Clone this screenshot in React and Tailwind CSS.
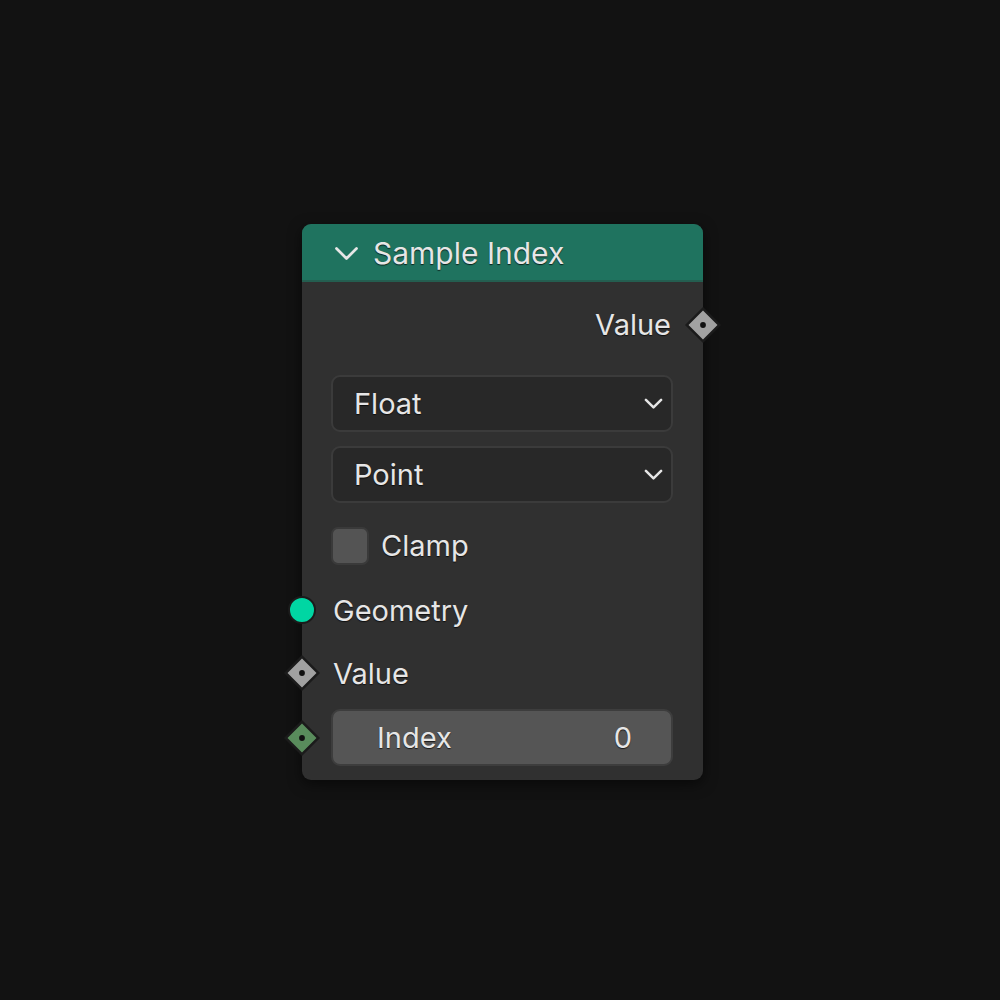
import React from 'react';

const txt = 'text-[#e6e6e6] [text-shadow:0_1px_1px_rgba(0,0,0,0.7)]';

const Diamond = ({ color }) => (
  <svg width="38" height="38" viewBox="0 0 38 38" className="block">
    <rect x="7.5" y="7.5" width="23" height="23" transform="rotate(45 19 19)" fill={color} stroke="#1b1b1b" strokeWidth="2.5" />
    <circle cx="19" cy="19" r="2.9" fill="#111" />
  </svg>
);

const Chevron = ({ size = 18, stroke = 2.4 }) => (
  <svg width={size} height={size * 0.6} viewBox="0 0 20 12" fill="none" className="block">
    <path d="M2 2 L10 10 L18 2" stroke="#e6e6e6" strokeWidth={stroke} strokeLinecap="round" strokeLinejoin="round" />
  </svg>
);

const Dropdown = ({ label }) => (
  <div className="flex items-center justify-between h-[57px] rounded-[9px] bg-[#282828] border-2 border-[#3b3b3b] pl-[21px] pr-[8px]">
    <span className={`text-[29px] ${txt}`}>{label}</span>
    <Chevron size={19} stroke={2.6} />
  </div>
);

export default function App() {
  return (
    <div className="min-h-screen bg-[#121212] pt-[224px] pl-[302px]" style={{ fontFamily: 'Inter, "Noto Sans", sans-serif' }}>
      <div className="w-[401px] rounded-[9px] bg-[#303030] shadow-[0_4px_14px_rgba(0,0,0,0.55)]">
        <div className="flex items-center h-[58px] rounded-t-[9px] bg-[#1f735f] border-b-2 border-[#245e50] pl-[32px] gap-[14px] pt-[2px]">
          <Chevron size={25} stroke={2.2} />
          <span className={`text-[30px] ${txt}`}>Sample Index</span>
        </div>

        <div className="pt-[19px] pb-[14px] pl-[29px] pr-[30px]">
          <div className="relative flex items-center justify-end h-[48px] pr-[2px]">
            <span className={`text-[29px] ${txt}`}>Value</span>
            <div className="absolute right-[-49px] top-[5px]">
              <Diamond color="#a1a1a1" />
            </div>
          </div>

          <div className="mt-[26px] flex flex-col gap-[14px]">
            <Dropdown label="Float" />
            <Dropdown label="Point" />
          </div>

          <div className="mt-[24px] flex items-center h-[38px] gap-[12px]">
            <div className="w-[38px] h-[38px] rounded-[7px] bg-[#545454] border-2 border-[#3a3a3a]" />
            <span className={`text-[29px] ${txt}`}>Clamp</span>
          </div>

          <div className="relative mt-[14px] flex items-center h-[63px] pl-[2px]">
            <div className="absolute left-[-43px] top-[17px] w-[28px] h-[28px] rounded-full bg-[#00d6a3] border-2 border-[#1b1b1b]" />
            <span className={`text-[29px] ${txt}`}>Geometry</span>
          </div>

          <div className="relative flex items-center h-[63px] pl-[2px]">
            <div className="absolute left-[-48px] top-[12px]">
              <Diamond color="#a1a1a1" />
            </div>
            <span className={`text-[29px] ${txt}`}>Value</span>
          </div>

          <div className="relative mt-[4px]">
            <div className="absolute left-[-48px] top-[10px]">
              <Diamond color="#598c5c" />
            </div>
            <div className="flex items-center justify-between h-[57px] rounded-[9px] bg-[#555555] border-2 border-[#3d3d3d] pl-[44px] pr-[39px]">
              <span className={`text-[29px] ${txt}`}>Index</span>
              <span className={`text-[29px] ${txt}`}>0</span>
            </div>
          </div>
        </div>
      </div>
    </div>
  );
}
